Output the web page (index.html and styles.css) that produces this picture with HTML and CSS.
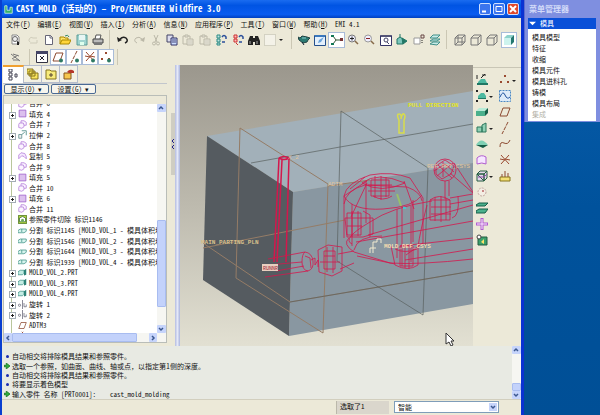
FILE: index.html
```
<!DOCTYPE html>
<html lang="zh-CN">
<head>
    <meta charset="UTF-8">
    <meta name="viewport" content="width=device-width, initial-scale=1.0">
    <title>CAST_MOLD (活动的) - Pro/ENGINEER Wildfire 3.0</title>
    <link rel="stylesheet" href="styles.css">
</head>
<body>
    <!-- Icon library -->
    <svg class="defs" aria-hidden="true">
        <symbol id="i-find" viewBox="0 0 12 12"><path d="M2 1h5l2 2v7H2z" fill="#fff" stroke="#888"/><circle cx="5" cy="5" r="2.500" fill="#eee" stroke="#666"/><path d="M7 7l2 1v3H7z" fill="#222"/></symbol>
        <symbol id="i-ghost" viewBox="0 0 12 12"><path d="M3 8a2 2 0 1 1 3-4h4M3 9h7v-3" fill="none" stroke="#cfccba"/></symbol>
        <symbol id="i-new" viewBox="0 0 12 12"><path d="M2.500 1.500h5l2 2v7h-7z" fill="#fff" stroke="#667"/><path d="M7 1v3h3" fill="none" stroke="#667"/></symbol>
        <symbol id="i-open" viewBox="0 0 12 12"><path d="M1 10V3h4l1 1h3v2" fill="#ffe36b" stroke="#a80"/><path d="M1 10l2-4h9l-2 4z" fill="#ffd53a" stroke="#a80"/><path d="M6 2q3-2 4 1" fill="none" stroke="#386"/></symbol>
        <symbol id="i-save" viewBox="0 0 12 12"><path d="M1 1h10v10H1z" fill="#9fd4cf" stroke="#5a9c98"/><path d="M3 1h6v5H3z" fill="#e8f6f4"/><path d="M4 8h4v3H4z" fill="#dfe"/></symbol>
        <symbol id="i-print" viewBox="0 0 12 12"><path d="M3 5l1-4h5l-1 4" fill="#fff" stroke="#555"/><path d="M1 5h10v4H1z" fill="#bbb" stroke="#444"/><path d="M2 9h8v2H2z" fill="#777"/></symbol>
        <symbol id="i-undo" viewBox="0 0 12 12"><path d="M3 5q3-3 6-1 3 3-1 5" fill="none" stroke="#222" stroke-width="1.500"/><path d="M0 3l1 5 4-2z" fill="#222"/></symbol>
        <symbol id="i-redo" viewBox="0 0 12 12"><path d="M9 5q-3-3-6-1-3 3 1 5" fill="none" stroke="#bbb8a8"/><path d="M12 3l-1 5-4-2z" fill="#bbb8a8"/></symbol>
        <symbol id="i-cut" viewBox="0 0 12 12"><path d="M4 1l3 7M8 1L5 8" stroke="#bbb8a8"/><circle cx="4" cy="9.500" r="1.500" fill="none" stroke="#bbb8a8"/><circle cx="8" cy="9.500" r="1.500" fill="none" stroke="#bbb8a8"/></symbol>
        <symbol id="i-copy" viewBox="0 0 12 12"><path d="M1 1h6v7H1z" fill="#dde" stroke="#446"/><path d="M5 4h6v7H5z" fill="#cdf" stroke="#336"/><path d="M6 6h4M6 8h4" stroke="#447"/></symbol>
        <symbol id="i-paste" viewBox="0 0 12 12"><path d="M1 2h7v8H1z" fill="none" stroke="#bbb8a8"/><path d="M3 1h3v2H3zM5 5h6v6H5z" fill="#e8e6da" stroke="#bbb8a8"/><path d="M6 7h4M6 9h4" stroke="#ccc9bb"/></symbol>
        <symbol id="i-regen" viewBox="0 0 12 12"><path d="M2 1h3v3H2zM2 5h3v3H2zM2 9h3v2H2z" fill="#bfe3df" stroke="#2a8a84"/><path d="M7 3q2-3 4 0v2M10 8H7" fill="none" stroke="#2b4f9a" stroke-width="1.500"/></symbol>
        <symbol id="i-regen2" viewBox="0 0 12 12"><path d="M2 1h3v3H2zM2 5h3v3H2z" fill="#fbb" stroke="#c33"/><path d="M4 9l2 2" stroke="#c33"/><path d="M7 3q2-3 4 0v2M10 8H7" fill="none" stroke="#2b4f9a" stroke-width="1.500"/></symbol>
        <symbol id="i-bino" viewBox="0 0 12 12"><path d="M2 2h3v2h2V2h3l2 5v4H7V8H5v3H0V7z" fill="#222"/><path d="M2 7v3M9 7v3" stroke="#aaa"/></symbol>
        <symbol id="i-select" viewBox="0 0 12 12"><path d="M.500.500h11v11H.500z" fill="#f4f2e8" stroke="#b9b6a6" stroke-dasharray="1 1"/></symbol>
        <symbol id="i-spin" viewBox="0 0 12 12"><path d="M0 3l2 1 2-2 5 1 3 1-2 2-1 2-4 1-4-3z" fill="#2b7a72" stroke="#244"/><path d="M4 4h4" stroke="#8cc"/><path d="M4 8l2 3" stroke="#123"/></symbol>
        <symbol id="i-repaint" viewBox="0 0 12 12"><path d="M.500 1.500h11v10H.500z" fill="#e4f0fc" stroke="#25508c"/><path d="M1 1h10v2H1z" fill="#3a78bd"/><path d="M4 9l1-3 5-3-3 5z" fill="#6aa4dc"/></symbol>
        <symbol id="i-axes" viewBox="0 0 12 12"><path d="M2 2l3 4-3 4M5 6h5" stroke="#353" fill="none"/><path d="M0 1h3v2H0zM0 9h3v2H0z" fill="#175"/><path d="M9 4h3v3H9z" fill="#733"/></symbol>
        <symbol id="i-zoomin" viewBox="0 0 12 12"><circle cx="5" cy="4.500" r="3.500" fill="#eef" stroke="#777"/><path d="M3 4.500h4M5 2.500v4" stroke="#222"/><path d="M8 7l3 3" stroke="#866a4a" stroke-width="1.500"/></symbol>
        <symbol id="i-zoomout" viewBox="0 0 12 12"><circle cx="5" cy="4.500" r="3.500" fill="#eef" stroke="#999"/><path d="M3 4.500h4" stroke="#822"/><path d="M8 7l3 3" stroke="#866a4a" stroke-width="1.500"/></symbol>
        <symbol id="i-refit" viewBox="0 0 12 12"><path d="M.500 1.500h11v10H.500z" fill="#fff" stroke="#336"/><path d="M1 1h10v2H1z" fill="#557"/><circle cx="6" cy="6" r="2" fill="none" stroke="#446"/><path d="M7 8l2 2" stroke="#446"/></symbol>
        <symbol id="i-orient" viewBox="0 0 12 12"><path d="M1 5l3-2 3 2v5H1z" fill="#7cc6bc" stroke="#276"/><path d="M4 0v3M6 4l5 3-4 3z" fill="#276" stroke="#276"/></symbol>
        <symbol id="i-saved" viewBox="0 0 12 12"><path d="M1 4h6v6H1z" fill="#fff" stroke="#999"/><path d="M8 1h3v3H8z" fill="none" stroke="#644"/><path d="M9 6v4" stroke="#222" stroke-dasharray="1 1"/></symbol>
        <symbol id="i-layers" viewBox="0 0 12 12"><path d="M1 4l3-3h7L8 4zM1 7l3-2h7L8 7zM1 10l3-2h7l-3 3z" fill="#c8ebe7" stroke="#3f8f88"/></symbol>
        <symbol id="i-wire" viewBox="0 0 12 12"><path d="M1 4h7v7H1zM4 1h7v7H4zM1 4l3-3M8 4l3-3M8 11l3-3M1 11l3-3" fill="none" stroke="#777"/></symbol>
        <symbol id="i-hidden" viewBox="0 0 12 12"><path d="M1 4h7v7H1zM1 4l3-3h7v7l-3 3M8 4l3-3" fill="none" stroke="#777"/></symbol>
        <symbol id="i-shade" viewBox="0 0 12 12"><path d="M1 4h7v7H1z" fill="#cdf3ee"/><path d="M1 4l3-3h7L8 4z" fill="#8fd3cc"/><path d="M8 4l3-3v7l-3 3z" fill="#24776f"/></symbol>
        <symbol id="i-pin" viewBox="0 0 12 12"><path d="M1 3l9 7M3 3l6 2M2 8l6-4M3 9h6" stroke="#777"/></symbol>
        <symbol id="i-csys" viewBox="0 0 12 12"><path d="M.500.500h11v11H.500z" fill="#fff" stroke="#334"/><path d="M0 0h12v3H0z" fill="#446"/><path d="M4 5l4 4M8 5L4 9" stroke="#223"/></symbol>
        <symbol id="i-plane" viewBox="0 0 12 12"><path d="M4 2h7L8 10H1z" fill="none" stroke="#8c4a30"/></symbol>
        <symbol id="i-axis" viewBox="0 0 12 12"><path d="M9 0L3 12" stroke="#8c4a30" stroke-dasharray="4 1"/></symbol>
        <symbol id="i-point" viewBox="0 0 12 12"><path d="M5 1l2 2M7 1L5 3M1 7l2 2M3 7L1 9M8 7l2 2M10 7L8 9" stroke="#9a4a30"/></symbol>
        <symbol id="i-csys2" viewBox="0 0 12 12"><path d="M2 1l8 9M10 1L2 10M6 5l5 1M1 5l5 1" stroke="#9a4a30"/></symbol>
        <symbol id="i-eye" viewBox="0 0 12 12"><circle cx="9" cy="9.500" r="2" fill="#2f7a64"/></symbol>
        <symbol id="i-treetab" viewBox="0 0 12 12"><path d="M2 0h3v3H2zM2 4h3v3H2zM2 8h3v3H2zM8 5h2v3H8z" fill="#fff" stroke="#445"/></symbol>
        <symbol id="i-folders" viewBox="0 0 12 12"><path d="M0 1h6v5H0zM2 3h6v5H2zM4 5h7v6H4z" fill="#f7e35c" stroke="#86741c"/></symbol>
        <symbol id="i-fav" viewBox="0 0 12 12"><path d="M1 2h4l1 1h5v8H1z" fill="#f8ec7a" stroke="#86741c"/><path d="M6 5v4M4 7h4" stroke="#543"/></symbol>
        <symbol id="i-conn" viewBox="0 0 12 12"><path d="M1 5h7v6H1z" fill="#f5c64d" stroke="#86541c"/><path d="M4 4q3-4 7-1v2H6z" fill="#b5362a"/></symbol>
        <symbol id="i-fill" viewBox="0 0 12 12"><path d="M1.500 1.500h9v9h-9z" fill="#dcc0ee" stroke="#9a58c8"/></symbol>
        <symbol id="i-merge" viewBox="0 0 12 12"><path d="M4 4V1h4l3 2v4H8v2l-3 2-4-1V6l1-2z" fill="#fbf4ff" stroke="#b078d8"/><path d="M4 4h3l1 3" fill="none" stroke="#b078d8"/></symbol>
        <symbol id="i-dup" viewBox="0 0 12 12"><path d="M1 9V4l3-3 5 1 2 4v3L8 6 5 5z" fill="#f5eaff" stroke="#b078d8"/></symbol>
        <symbol id="i-extrude" viewBox="0 0 12 12"><path d="M1 6h4v5H1z" fill="#eee" stroke="#588"/><path d="M5 1h6v6" fill="none" stroke="#397d78"/><path d="M5 6l4-3" stroke="#397d78"/></symbol>
        <symbol id="i-refcut" viewBox="0 0 12 12"><path d="M.500.500h11v11H.500z" fill="#b4d63e" stroke="#3f6a18"/><path d="M2 4l4-2 4 2v5H2z" fill="#fff" stroke="#386a3a"/><circle cx="6" cy="7" r="2" fill="#6aa85c"/></symbol>
        <symbol id="i-split" viewBox="0 0 12 12"><path d="M0 6l3-2h8v3L8 9H0z" fill="#d8f4ee" stroke="#3e9286"/><path d="M5 4v4" stroke="#3e9286"/></symbol>
        <symbol id="i-part" viewBox="0 0 12 12"><path d="M0 5l3-2h5v4L6 9H0z" fill="#c4ece4" stroke="#3e9286"/><path d="M8 3l3-2v8l-3 1z" fill="#2c8276"/></symbol>
        <symbol id="i-revolve" viewBox="0 0 12 12"><path d="M6 0v12" stroke="#667"/><circle cx="2" cy="7" r="1.500" fill="none" stroke="#667"/><path d="M8 4v5h3V6" fill="none" stroke="#667"/></symbol>
        <symbol id="i-block" viewBox="0 0 12 12"><path d="M0 5l3-3h9l-3 3z" fill="#b8ecd8"/><path d="M0 5h9v5H0z" fill="#4bb08c"/><path d="M9 5l3-3v5l-3 3z" fill="#165e48"/></symbol>
        <symbol id="i-locate" viewBox="0 0 12 12"><path d="M1 1v4M9 0L5 4M6 1h4" stroke="#222"/><path d="M2 8l3-3h4l2 4H2z" fill="#4bb8a0"/><path d="M1 9h11v2H1z" fill="#1f7764"/></symbol>
        <symbol id="i-shrink" viewBox="0 0 12 12"><path d="M2 6l3-3h3l2 3v3H2z" fill="#4bb8a0"/><path d="M2 8h8v1H2z" fill="#1f7764"/><path d="M0 0h2v2H0zM10 0h2v2h-2zM0 10h2v2H0zM10 10h2v2h-2z" fill="#222"/></symbol>
        <symbol id="i-vol" viewBox="0 0 12 12"><path d="M1 5h5v5H1zM6 3l4-2v9H6z" fill="#8fd0b4" stroke="#2c765c"/></symbol>
        <symbol id="i-dome" viewBox="0 0 12 12"><path d="M0 7q5-9 12 0z" fill="#7fd0b4"/><path d="M0 7h12l-5 3z" fill="#155a44"/></symbol>
        <symbol id="i-surf" viewBox="0 0 12 12"><path d="M1 10V4q4-4 9-1v7q-4-2-9 0z" fill="#f6e6ff" stroke="#b05cd0"/></symbol>
        <symbol id="i-box" viewBox="0 0 12 12"><path d="M1 4h7v7H1zM1 4l3-3h7v7l-3 3z" fill="#e4d8ec" stroke="#245c40"/><path d="M8 4v7M1 4h7l3-3" fill="none" stroke="#245c40"/><path d="M2 7h6l3-3" fill="none" stroke="#8f4fa8"/></symbol>
        <symbol id="i-ring" viewBox="0 0 12 12"><circle cx="6" cy="6" r="4" fill="#f4eee4" stroke="#c2a8a0" stroke-dasharray="2 1"/><circle cx="7" cy="5" r="1" fill="#b66"/></symbol>
        <symbol id="i-opening" viewBox="0 0 12 12"><path d="M0 3l3-2h9L9 4H0zM0 9l3-2h9l-3 4H0z" fill="#4bb08c" stroke="#165e48"/></symbol>
        <symbol id="i-cross" viewBox="0 0 12 12"><path d="M6 0v12M0 6h12" stroke="#b05cd0" stroke-width="3"/><path d="M6 1v10M1 6h10" stroke="#fbeaff"/></symbol>
        <symbol id="i-play" viewBox="0 0 12 12"><path d="M2 3h9v8H2z" fill="#3ba06c" stroke="#245c40"/><circle cx="3" cy="3" r="2" fill="#fff" stroke="#444"/><path d="M5 8l3-3v5z" fill="#ffe36b"/></symbol>
        <symbol id="i-sketch" viewBox="0 0 12 12"><path d="M.500.500h11v11H.500z" fill="#dceaf8" stroke="#4a88c4" stroke-dasharray="2 1"/><path d="M1 7q3-7 5-2t5 2" fill="none" stroke="#1c4f9c"/></symbol>
        <symbol id="i-curve" viewBox="0 0 12 12"><path d="M1 9q0-6 4-4t6-3" fill="none" stroke="#8c4a30"/></symbol>
        <symbol id="i-anal" viewBox="0 0 12 12"><path d="M1 7h10v4H1z" fill="#f3df74" stroke="#86741c"/><path d="M3 7V4M6 7V1M9 7V3" stroke="#8c4a30"/></symbol>
        <symbol id="i-arrow" viewBox="0 0 8 8"><path d="M0 3h3V0l5 4-5 4V5H0z" fill="#2fae3c" stroke="#14701f"/></symbol>
    </svg>

    <main class="app">
        <header class="titlebar">
            <svg class="logo" viewBox="0 0 12 12"><path d="M1 1h3v6h4V3h3v8H1z" fill="#35b06a" stroke="#d9f7e4"/></svg>
            <h1>CAST_MOLD (活动的) – Pro/ENGINEER Wildfire 3.0</h1>
            <div class="win-buttons">
                <button class="win" aria-label="最小化"><svg viewBox="0 0 10 10"><path d="M2 7.500h4" stroke="#fff" stroke-width="2"/></svg></button>
                <button class="win" aria-label="最大化"><svg viewBox="0 0 10 10"><path d="M2 2.500h6v5H2z" fill="none" stroke="#fff"/></svg></button>
                <button class="win win-close" aria-label="关闭"><svg viewBox="0 0 10 10"><path d="M2 2l6 6M8 2L2 8" stroke="#fff" stroke-width="2"/></svg></button>
            </div>
        </header>

        <nav class="menubar">
            <button>文件(<u>F</u>)</button>
            <button>编辑(<u>E</u>)</button>
            <button>视图(<u>V</u>)</button>
            <button>插入(<u>I</u>)</button>
            <button>分析(<u>A</u>)</button>
            <button>信息(<u>N</u>)</button>
            <button>应用程序(<u>P</u>)</button>
            <button>工具(<u>T</u>)</button>
            <button>窗口(<u>W</u>)</button>
            <button>帮助(<u>H</u>)</button>
            <button>EMI 4.1</button>
        </nav>

        <div class="toolbar">
            <div class="group group-6">
                <button aria-label="查找"><svg><use href="#i-find"/></svg></button>
                <button aria-label="发送" disabled><svg><use href="#i-ghost"/></svg></button>
                <button aria-label="新建"><svg><use href="#i-new"/></svg></button>
                <button aria-label="打开"><svg><use href="#i-open"/></svg></button>
                <button aria-label="保存"><svg><use href="#i-save"/></svg></button>
                <button aria-label="打印"><svg><use href="#i-print"/></svg></button>
            </div>
            <div class="group group-10">
                <button aria-label="撤消"><svg><use href="#i-undo"/></svg></button>
                <button aria-label="重做" disabled><svg><use href="#i-redo"/></svg></button>
                <button aria-label="剪切" disabled><svg><use href="#i-cut"/></svg></button>
                <button aria-label="复制"><svg><use href="#i-copy"/></svg></button>
                <button aria-label="粘贴" disabled><svg><use href="#i-paste"/></svg></button>
                <button aria-label="选择性粘贴" disabled><svg><use href="#i-paste"/></svg></button>
                <button aria-label="再生"><svg><use href="#i-regen"/></svg></button>
                <button aria-label="再生管理器"><svg><use href="#i-regen2"/></svg></button>
                <button aria-label="搜索"><svg><use href="#i-bino"/></svg></button>
                <button class="more" aria-label="选取框"><svg><use href="#i-select"/></svg></button>
            </div>
            <div class="group group-9">
                <button aria-label="旋转中心"><svg><use href="#i-spin"/></svg></button>
                <button aria-label="重画"><svg><use href="#i-repaint"/></svg></button>
                <button class="pressed" aria-label="定向模式"><svg><use href="#i-axes"/></svg></button>
                <button aria-label="放大"><svg><use href="#i-zoomin"/></svg></button>
                <button aria-label="缩小"><svg><use href="#i-zoomout"/></svg></button>
                <button aria-label="重新调整"><svg><use href="#i-refit"/></svg></button>
                <button aria-label="重定向"><svg><use href="#i-orient"/></svg></button>
                <button aria-label="已保存视图"><svg><use href="#i-saved"/></svg></button>
                <button aria-label="层"><svg><use href="#i-layers"/></svg></button>
            </div>
            <div class="group group-4">
                <button aria-label="线框"><svg><use href="#i-wire"/></svg></button>
                <button aria-label="隐藏线"><svg><use href="#i-hidden"/></svg></button>
                <button aria-label="无隐藏线"><svg><use href="#i-hidden"/></svg></button>
                <button class="pressed" aria-label="着色"><svg><use href="#i-shade"/></svg></button>
            </div>
        </div>

        <div class="toolbar toolbar-datum">
            <div class="group">
                <button aria-label="注释"><svg><use href="#i-pin"/></svg></button>
            </div>
            <div class="group">
                <button aria-label="显示"><svg><use href="#i-csys"/></svg></button>
                <button class="pressed" aria-label="基准平面"><svg><use href="#i-plane"/><use href="#i-eye"/></svg></button>
                <button class="pressed" aria-label="基准轴"><svg><use href="#i-axis"/><use href="#i-eye"/></svg></button>
                <button class="pressed" aria-label="坐标系"><svg><use href="#i-csys2"/><use href="#i-eye"/></svg></button>
                <button class="pressed" aria-label="基准点"><svg><use href="#i-point"/><use href="#i-eye"/></svg></button>
            </div>
        </div>

        <div class="work">
            <aside class="navigator">
                <div class="tabs">
                    <button class="tab active" aria-label="模型树"><svg><use href="#i-treetab"/></svg></button>
                    <button class="tab" aria-label="文件夹"><svg><use href="#i-folders"/></svg></button>
                    <button class="tab" aria-label="收藏夹"><svg><use href="#i-fav"/></svg></button>
                    <button class="tab" aria-label="连接"><svg><use href="#i-conn"/></svg></button>
                </div>
                <div class="tree-actions">
                    <button>显示(<u>O</u>) ▾</button>
                    <button>设置(<u>G</u>) ▾</button>
                </div>
                <div class="tree-box">
                    <div class="tree-view">
                        <ul class="tree">
                            <li><svg><use href="#i-merge"/></svg>合并 6</li>
                            <li class="node"><svg><use href="#i-fill"/></svg>填充 4</li>
                            <li><svg><use href="#i-merge"/></svg>合并 7</li>
                            <li class="node"><svg><use href="#i-extrude"/></svg>拉伸 2</li>
                            <li><svg><use href="#i-merge"/></svg>合并 8</li>
                            <li><svg><use href="#i-dup"/></svg>复制 5</li>
                            <li><svg><use href="#i-merge"/></svg>合并 9</li>
                            <li class="node"><svg><use href="#i-fill"/></svg>填充 5</li>
                            <li><svg><use href="#i-merge"/></svg>合并 10</li>
                            <li class="node"><svg><use href="#i-fill"/></svg>填充 6</li>
                            <li><svg><use href="#i-merge"/></svg>合并 11</li>
                            <li><svg><use href="#i-refcut"/></svg>参照零件切除 标识1146</li>
                            <li><svg><use href="#i-split"/></svg>分割 标识1145 [MOLD_VOL_1 - 模具体积块]</li>
                            <li><svg><use href="#i-split"/></svg>分割 标识1546 [MOLD_VOL_2 - 模具体积块]</li>
                            <li><svg><use href="#i-split"/></svg>分割 标识1644 [MOLD_VOL_3 - 模具体积块]</li>
                            <li><svg><use href="#i-split"/></svg>分割 标识1939 [MOLD_VOL_4 - 模具体积块]</li>
                            <li class="node"><svg><use href="#i-part"/></svg>MOLD_VOL_2.PRT</li>
                            <li class="node"><svg><use href="#i-part"/></svg>MOLD_VOL_3.PRT</li>
                            <li class="node"><svg><use href="#i-part"/></svg>MOLD_VOL_4.PRT</li>
                            <li class="node"><svg><use href="#i-revolve"/></svg>旋转 1</li>
                            <li class="node"><svg><use href="#i-revolve"/></svg>旋转 2</li>
                            <li><svg><use href="#i-plane"/></svg>ADTM3</li>
                            <li><svg><use href="#i-point"/></svg>APNT0</li>
                        </ul>
                    </div>
                    <div class="scroll scroll-tree">
                        <button aria-label="向上"><svg viewBox="0 0 8 8"><path d="M2 5l2-2 2 2" /></svg></button>
                        <span class="thumb"></span>
                        <button aria-label="向下"><svg viewBox="0 0 8 8"><path d="M2 3l2 2 2-2" /></svg></button>
                    </div>
                    <div class="scroll scroll-h">
                        <button aria-label="向左"><svg viewBox="0 0 8 8"><path d="M5 2L3 4l2 2" /></svg></button>
                        <span class="thumb"></span>
                        <button aria-label="向右"><svg viewBox="0 0 8 8"><path d="M3 2l2 2-2 2" /></svg></button>
                    </div>
                </div>
            </aside>
            <div class="sash">
                <button class="handle" aria-label="折叠"><svg viewBox="0 0 4 12"><path d="M3 1L1 3l2 2M3 7L1 9l2 2" fill="none" stroke="#22228a"/></svg></button>
            </div>
            <div class="rail"></div>

            <svg class="canvas" viewBox="180 65 293 281" preserveAspectRatio="none">
                <defs>
                    <linearGradient id="sky" x1="0" y1="0" x2="0" y2="1">
                        <stop offset="0" stop-color="#9b978d"/>
                        <stop offset=".5" stop-color="#bdbaae"/>
                        <stop offset="1" stop-color="#e2e0d2"/>
                    </linearGradient>
                </defs>
                <rect x="180" y="65" width="293" height="281" fill="url(#sky)"/>
                <!-- mold block -->
                <path d="M207 136L473 91V163L293 192z" fill="#a2b0b9"/>
                <path d="M293 192L473 163V304L289 336z" fill="#8997a1"/>
                <path d="M207 136L293 192 289 336 203 280z" fill="#555b60"/>
                <!-- datum planes -->
                <g class="datum">
                    <path d="M240 128L328 184 323 333 236 278z"/>
                    <path d="M203 248L345 220M203 243L290 302 473 271M328 186L370 180"/>
                </g>
                <g class="datum-dark">
                    <path d="M341 111L428 168 423 315 337 261z"/>
                    <path d="M251 163L340 147 473 124M290 302L473 271"/>
                </g>
                <!-- reference part and runner -->
                <g class="part">
                    <path d="M279 158L274 262M289 158L286 262M282 160L277 262M279 158q5-3 10 0q-5 3-10 0" stroke-width="1.500"/>
                    <path d="M268 259L305 252M265 277L308 271M268 265L302 262M276 271L304 266M305 252q7 1 8 9t-5 10q-6-1-6-9t3-10M305 256l5 2 1 10"/>
                    <path d="M311 260l4-2v7l3-5v7M318 250l10-5 14 2v24l-10 5-13-4zM324 251h11v18h-11zM327 247v25M333 247v26M320 262h20M324 256h11M338 254l16-3M340 269l14-6"/>
                    <path d="M344 196q2-13 26-21 22-4 40 3l13 20v45l-17 12M344 196v42M344 196q8 15 39 13 31-2 39-14M362 183q15-12 43 0M362 183q19 11 43 0M344 204q2-14 21-19l42 2q14 5 15 14M367 183l-16 34M352 204v42M366 181v42M404 181l10 28M413 200v42M350 189l15-12M344 196L367 181"/>
                    <path d="M371 180h18v16h-18zM375 176v22M381 176v24M386 177v20M368 185h24M368 191h27M373 196q10 6 19 0"/>
                    <path d="M347 213h14v22h-14zM352 211v26M358 211v25M345 218h28v16l-10 3h-16zM363 211l7 4v22M347 226h15"/>
                    <path d="M349 238q-7 6 5 14l36 11q29 2 83-4M354 250q3-14 28-14M352 244q-11-5 18-22 22-15 62-21M357 256l38 8M356 242L473 221M368 235L473 205M400 246L473 238M405 260L473 249"/>
                    <path d="M397 209v49M402 206v60M411 206v56M400 246h13v20h-13zM405 244v24M409 245v24M391 246l4 19q13 7 23 0v-18M418 247q2-15 9-42M395 249q10 5 22 0"/>
                    <circle cx="445" cy="170" r="11"/>
                    <path d="M436 166l9-6 9 6-3 8-9 5-6-5zM437 176l16-13M438 165l14 13M434 171l11-7 9 8M443 162v15M445 181v18M449 181v15M454 163l19 29M450 173l23 20"/>
                    <path d="M430 200h20v20h-20zM435 197v24M441 196v26M446 198v22M431 207h20M431 214h20M450 198l23-4M450 204l23-4M452 218q8-2 6-22M430 200q9-7 20 0"/>
                </g>
                <path d="M397 194l4 12" stroke="#9ac06a" stroke-width="2"/>
                <path d="M403 208h3" stroke="#46c5d2" stroke-width="2"/>
                <path d="M399 133v-13q-3-6 0-6 3 0 2 5 1-6 3-5 2 2 0 6v13z" fill="none" stroke="#d8dc4c" stroke-width="1.500"/>
                <path d="M370 253v-5h3v-6h4v-3h4v4M373 253v-5h3" fill="none" stroke="#f0ead0"/>
                <rect x="262" y="264" width="16" height="7" fill="#e9cfc0"/>
                <text x="408" y="107" class="label label-pull">PULL DIRECTION</text>
                <text x="201" y="244" class="label label-main">MAIN_PARTING_PLN</text>
                <text x="328" y="186" class="label">ADTM</text>
                <text x="288" y="159" class="label">X_2</text>
                <text x="427" y="168" class="label">REF_PRT_CSYS</text>
                <text x="263" y="270" class="label label-red">RUNNR</text>
                <text x="384" y="248" class="label label-csys">MOLD_DEF_CSYS</text>
                <path d="M446 333v11l3-2 2 4 2-1-2-4h3z" fill="#fff" stroke="#333"/>
            </svg>

            <div class="mold-tools">
                <div class="tool-col">
                    <button aria-label="定位参照零件"><svg><use href="#i-locate"/></svg></button>
                    <button class="more" aria-label="收缩"><svg><use href="#i-shrink"/></svg></button>
                    <button aria-label="工件"><svg><use href="#i-block"/></svg></button>
                    <button class="more" aria-label="体积块"><svg><use href="#i-vol"/></svg></button>
                    <button aria-label="侧面影像"><svg><use href="#i-dome"/></svg></button>
                    <button aria-label="分型面"><svg><use href="#i-surf"/></svg></button>
                    <button class="more" aria-label="分割"><svg><use href="#i-box"/></svg></button>
                    <button aria-label="修剪" disabled><svg><use href="#i-ring"/></svg></button>
                    <button aria-label="开模"><svg><use href="#i-opening"/></svg></button>
                    <button aria-label="检查"><svg><use href="#i-cross"/></svg></button>
                    <button aria-label="分析"><svg><use href="#i-play"/></svg></button>
                </div>
                <div class="tool-col">
                    <button class="more" aria-label="点"><svg><use href="#i-point"/></svg></button>
                    <button aria-label="草绘"><svg><use href="#i-sketch"/></svg></button>
                    <button aria-label="平面"><svg><use href="#i-plane"/></svg></button>
                    <button aria-label="轴"><svg><use href="#i-axis"/></svg></button>
                    <button aria-label="曲线"><svg><use href="#i-curve"/></svg></button>
                    <button aria-label="坐标系"><svg><use href="#i-csys2"/></svg></button>
                    <button aria-label="分析特征"><svg><use href="#i-anal"/></svg></button>
                </div>
            </div>
        </div>

        <section class="messages">
            <ul>
                <li><i class="dot"></i>自动相交将排除模具结果和参照零件。</li>
                <li class="wide"><svg><use href="#i-arrow"/></svg>选取一个参照，如曲面、曲线、轴或点，以指定第1侧的深度。</li>
                <li><i class="dot"></i>自动相交将排除模具结果和参照零件。</li>
                <li><i class="dot"></i>将要显示着色模型</li>
                <li><svg><use href="#i-arrow"/></svg>输入零件 名称 [PRT0001]: &nbsp; &nbsp;cast_mold_molding</li>
            </ul>
            <div class="scroll scroll-msg">
                <button aria-label="向上"><svg viewBox="0 0 8 8"><path d="M2 5l2-2 2 2" /></svg></button>
                <span class="thumb"></span>
                <button aria-label="向下"><svg viewBox="0 0 8 8"><path d="M2 3l2 2 2-2" /></svg></button>
            </div>
        </section>

        <footer class="status">
            <label for="filter">选取了1</label>
            <div class="select-wrap">
                <select id="filter"><option>智能</option></select>
                <svg viewBox="0 0 8 8"><path d="M2 3l2 2 2-2" /></svg>
            </div>
        </footer>
    </main>

    <aside class="menu-manager">
        <h2>菜单管理器</h2>
        <h3><svg viewBox="0 0 8 8"><path d="M0 2h8L4 6z" fill="#fff"/></svg>模具</h3>
        <ul>
            <li><button>模具模型</button></li>
            <li><button>特征</button></li>
            <li><button>收缩</button></li>
            <li><button>模具元件</button></li>
            <li><button>模具进料孔</button></li>
            <li><button>铸模</button></li>
            <li><button>模具布局</button></li>
            <li><button disabled>集成</button></li>
        </ul>
    </aside>
</body>
</html>
```
FILE: styles.css
```
* {
    box-sizing: border-box;
}
body {
    margin: 0;
    min-height: 100vh;
    display: flex;
    align-items: stretch;
    background: linear-gradient(#0a5fae, #00529c 50%, #004f96);
    font-family: "Noto Sans CJK SC", "Liberation Sans", sans-serif;
    font-feature-settings: "hwid";
    font-size: 7px;
    line-height: 10px;
    color: #111;
}
.defs {
    display: none;
}
ul {
    list-style: none;
    margin: 0;
    padding: 0;
}
button {
    font: inherit;
    font-feature-settings: inherit;
    color: inherit;
    background: none;
    border: 0;
    margin: 0;
    padding: 0;
}
button svg {
    display: block;
    width: 12px;
    height: 12px;
}
.app {
    flex: 1;
    min-width: 0;
    display: flex;
    flex-direction: column;
    background: #ece9d8;
    border-left: 2px solid #0a3fd0;
    border-right: 3px solid #0a32d2;
}

/* Title and menu */
.titlebar {
    display: flex;
    align-items: center;
    height: 18px;
    padding: 0 2px;
    gap: 3px;
    background: linear-gradient(#1a6cf0, #0054e3 30%, #0a5cf0 80%, #0040c0);
    color: #fff;
}
.titlebar .logo {
    width: 9px;
    height: 9px;
}
.titlebar h1 {
    flex: 1;
    margin: 0;
    font-size: 9px;
    font-weight: 700;
}
.win-buttons {
    display: flex;
    gap: 2px;
}
.win {
    width: 12px;
    height: 12px;
    border: 1px solid #cfe0ff;
    border-radius: 2px;
    background: #3b75ee;
}
.win svg {
    width: 10px;
    height: 10px;
}
.win-close {
    background: #e0492a;
}
.menubar {
    display: flex;
    align-items: center;
    gap: 7px;
    height: 12px;
    padding: 0 4px;
}

/* Toolbars */
.toolbar {
    display: flex;
    height: 19px;
    padding: 0 4px 0 6px;
}
.group {
    display: flex;
    align-items: center;
    padding-right: 3px;
    margin-right: 4px;
    border-right: 1px solid #cbc7b4;
}
.group:last-child {
    margin-right: 0;
}
.group button {
    flex: 1;
    height: 16px;
    display: flex;
    align-items: center;
    justify-content: center;
    border: 1px solid transparent;
}
.group .pressed {
    background: #fff;
    border-color: #a9bcd8;
}
.group-6 {
    flex: 6;
}
.group-10 {
    flex: 10;
    padding-right: 12px;
}
.group-9 {
    flex: 9;
}
.group-4 {
    flex: 4;
    border: 0;
    padding: 0;
}
.more {
    position: relative;
}
.more::after {
    content: "";
    position: absolute;
    right: -5px;
    top: 6px;
    border: 2px solid transparent;
    border-top-color: #222;
}
.toolbar-datum {
    height: 16px;
}
.toolbar-datum .group button {
    flex: 0 0 16px;
}
.toolbar-datum .group:first-child {
    padding-right: 5px;
}

/* Work area */
.work {
    flex: 1;
    display: flex;
    min-height: 0;
}
.navigator {
    width: 166px;
    display: flex;
    flex-direction: column;
    padding: 0 1px 3px;
}
.tabs {
    display: flex;
    height: 18px;
}
.tab {
    width: 18px;
    display: flex;
    align-items: center;
    justify-content: center;
    border: 1px solid #b5bccb;
    border-left: 0;
    background: #f3f1e4;
}
.tab.active {
    width: 21px;
    background: #fff;
    border-top: 2px solid #f0a030;
    border-bottom: 0;
}
.tree-actions {
    display: flex;
    gap: 2px;
    height: 12px;
    padding: 0 1px 1px;
    border-top: 1px solid #c2c6cc;
}
.tree-actions button {
    width: 45px;
    border: 1px solid #4a6a94;
    border-radius: 2px;
    background: #f6f5ee;
    line-height: 8px;
}
.tree-box {
    flex: 1;
    min-height: 0;
    display: grid;
    grid-template: minmax(0, 1fr) 9px / minmax(0, 1fr) 9px;
    padding-top: 8px;
    border: 1px solid #b9bdb8;
}
.tree-view {
    overflow: hidden;
    background: #fff;
    height: 0;
    min-height: 100%;
}
.tree {
    display: grid;
    grid-auto-rows: 1fr;
    height: 243px;
    margin: -6px 0 0 7px;
    border-left: 1px solid #b9c69c;
}
.tree li {
    position: relative;
    display: flex;
    align-items: center;
    gap: 2px;
    padding-left: 6px;
    white-space: nowrap;
    line-height: 10px;
}
.tree svg {
    flex: none;
    width: 9px;
    height: 9px;
}
/* expand marker: a boxed plus */
.tree .node::before {
    content: "";
    position: absolute;
    left: -3px;
    top: 3px;
    width: 5px;
    height: 5px;
    border: 1px solid #a4adb4;
    background:
        linear-gradient(#222, #222) center / 3px 1px no-repeat,
        linear-gradient(#222, #222) center / 1px 3px no-repeat,
        #fff;
}

/* Scrollbars */
.scroll {
    display: flex;
    flex-direction: column;
    background: #f6f6f2;
}
.scroll button {
    flex: none;
    background: #c6d4fb;
    border-radius: 1px;
}
.scroll svg,
.select-wrap svg {
    display: block;
    width: 8px;
    height: 8px;
    fill: none;
    stroke: #3c5890;
    stroke-width: 1.5;
}
.scroll .thumb {
    background: #c3d2fb;
    border: 1px solid #a8bcf0;
    border-radius: 1px;
}
.scroll-tree .thumb {
    height: 38%;
    margin: auto 0 18px;
}
.scroll-h {
    flex-direction: row;
    grid-column: 1 / -1;
    padding-right: 9px;
}
.scroll-h .thumb {
    flex: 1;
    margin-right: 12px;
}
.scroll-msg {
    width: 9px;
}
.scroll-msg .thumb {
    height: 8px;
    margin: auto 0 0;
}
.sash {
    width: 7px;
    display: flex;
    padding: 48px 0 0 3px;
}
.handle {
    width: 4px;
    height: 62px;
    background: #cfcdc2;
}
.handle svg {
    width: 4px;
    height: 12px;
}
.rail {
    width: 5px;
    background: linear-gradient(90deg, #b4bce0, #e4e8f8 50%, #aab4dc);
}
.canvas {
    flex: 1;
    min-width: 0;
    height: 100%;
}
.datum path,
.datum-dark path,
.part path,
.part circle {
    fill: none;
}
.datum {
    stroke: #957c66;
}
.datum-dark {
    stroke: #59605f;
    stroke-width: 0.7;
}
.part {
    stroke: #d4174c;
    stroke-width: 0.8;
}
.label {
    font-family: "Liberation Mono", monospace;
    font-size: 6px;
    fill: #e0c49a;
}
.label-pull {
    font-weight: 700;
    fill: #e4e41c;
}
.label-main {
    font-weight: 700;
    fill: #d8c08c;
}
.label-red {
    font-size: 5px;
    fill: #a02838;
}
.label-csys {
    font-weight: 700;
    fill: #f4dcb0;
}
.mold-tools {
    width: 48px;
    display: flex;
    gap: 11px;
    padding: 6px 0 0 3px;
    border-top: 1px solid #c9c6b6;
    margin-top: 2px;
}
.tool-col {
    display: grid;
    grid-auto-rows: 12px;
    gap: 4px;
    width: 12px;
    align-content: start;
}

/* Message log and status */
.messages {
    display: flex;
    justify-content: space-between;
    height: 54px;
    background: #e8eae3;
    border-bottom: 1px solid #d2cfbe;
}
.messages ul {
    display: grid;
    grid-auto-rows: 1fr;
    padding: 6px 0 0 2px;
}
.messages li {
    display: flex;
    align-items: center;
    gap: 2px;
    line-height: 9px;
}
.messages li svg {
    width: 6px;
    height: 6px;
}
/* keeps the full-width commas */
.messages .wide {
    font-feature-settings: normal;
}
.dot {
    width: 3px;
    height: 3px;
    margin: 0 1px 0 2px;
    border-radius: 50%;
    background: #1a2cb0;
}
.status {
    display: flex;
    justify-content: flex-end;
    gap: 5px;
    height: 15px;
    padding: 1px 22px 1px 0;
}
.status label {
    width: 53px;
    padding-left: 3px;
    background: #dad6cc;
    border-left: 1px solid #bbb8aa;
}
.select-wrap {
    position: relative;
    width: 105px;
}
.select-wrap select {
    display: block;
    appearance: none;
    width: 100%;
    height: 12px;
    padding: 0 3px;
    border: 1px solid #7f9db9;
    background: #fff;
    color: #111;
    font: inherit;
}
.select-wrap svg {
    position: absolute;
    right: 2px;
    top: 2px;
    background: #c6d4fb;
}

/* Menu manager */
.menu-manager {
    flex: none;
    align-self: flex-start;
    width: 76px;
    padding: 0 4px 1px 3px;
    background: #7f8fe0;
    border-left: 1px solid #5c6cd0;
}
.menu-manager h2 {
    margin: 0;
    padding-left: 1px;
    font-size: 8px;
    font-weight: 700;
    line-height: 18px;
    color: #d2daf8;
}
.menu-manager h3 {
    display: flex;
    align-items: center;
    gap: 4px;
    margin: 0;
    padding-left: 1px;
    font-size: 7px;
    font-weight: 400;
    line-height: 11px;
    background: #0a50d8;
    color: #fff;
}
.menu-manager h3 svg {
    width: 7px;
    height: 7px;
}
.menu-manager ul {
    padding: 2px 0 2px 4px;
    background: #fff;
}
.menu-manager li {
    display: flex;
    height: 11px;
}
.menu-manager button:disabled {
    color: #b4b2a8;
}
```
